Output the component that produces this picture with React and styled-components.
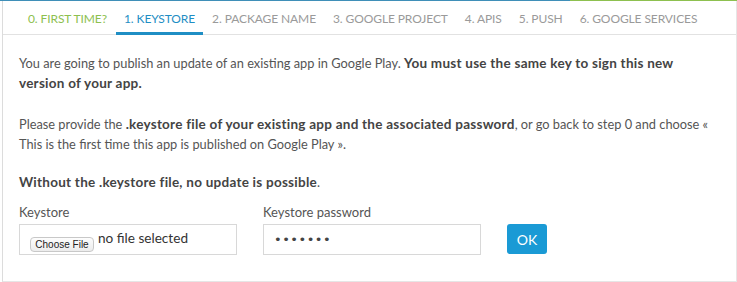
import React from 'react';
import styled, { createGlobalStyle } from 'styled-components';

const GlobalStyle = createGlobalStyle`
    html, body {
        margin: 0;
        padding: 0;
        background: #fff;
        font-family: Lato, "Open Sans", sans-serif;
    }
`;

const Panel = styled.div`
    width: 735px;
    height: 282px;
    margin-left: 2px;
    box-sizing: border-box;
    border-left: 1px solid #dcdcdc;
    border-right: 1px solid #e6e6e6;
    border-bottom: 1px solid #e6e6e6;
    display: flex;
    flex-direction: column;
`;

const Progress = styled.div`
    display: flex;
    height: 1px;
    margin-left: -3px;
    margin-right: -1px;
`;

const ProgressPart = styled.div`
    flex: ${p => p.$grow};
    background: ${p => p.$color};
`;

const Tabs = styled.ul`
    list-style: none;
    margin: 0;
    padding: 0 0 0 17px;
    display: flex;
    height: 33px;
    border-bottom: 1px solid #e2e2e2;
`;

const Tab = styled.li`
    padding: 3px 8px 0 8px;
    margin-right: 1px;
    margin-bottom: -1px;
    display: flex;
    align-items: center;
    font-size: 12px;
    text-transform: uppercase;
    letter-spacing: -0.1px;
    color: ${p => (p.$done ? '#8dc04f' : p.$active ? '#1f8ec4' : '#9a9a9a')};
    border-bottom: 3px solid ${p => (p.$active ? '#1f8ec4' : 'transparent')};
`;

const Body = styled.div`
    width: 700px;
    padding: 18px 0 0 16px;
    color: #555;
    font-size: 12.8px;
    line-height: 20px;
`;

const Paragraph = styled.p`
    margin: 0 0 ${p => p.$gap}px 0;
    color: #555;
    strong {
        color: #444;
        font-weight: 700;
        font-size: 13.5px;
        letter-spacing: 0.25px;
    }
`;

const FieldRow = styled.div`
    display: flex;
    align-items: flex-end;
    gap: 26px;
    margin-top: -9px;
`;

const Field = styled.div`
    display: flex;
    flex-direction: column;
`;

const Label = styled.label`
    font-size: 13px;
    color: #555;
    line-height: 20px;
    margin-bottom: 2px;
`;

const Box = styled.div`
    width: 218px;
    height: 31px;
    box-sizing: border-box;
    border: 1px solid #d8d8d8;
    display: flex;
    align-items: center;
    padding: 0 10px;
`;

const ChooseButton = styled.button`
    font-family: "Liberation Sans", Arial, sans-serif;
    font-size: 10px;
    color: #222;
    background: linear-gradient(#fdfdfd, #ececec);
    border: 1px solid #c8c8c8;
    border-radius: 4px;
    height: 15px;
    width: 64px;
    padding: 0;
    margin-top: 9px;
`;

const FileText = styled.span`
    font-size: 13.6px;
    color: #333;
    margin-left: 4px;
    margin-top: -4px;
`;

const PasswordInput = styled.input`
    width: 218px;
    height: 31px;
    box-sizing: border-box;
    border: 1px solid #d8d8d8;
    padding: 0 10px;
    font-size: 13px;
    letter-spacing: 0.5px;
    color: #444;
    outline: none;
    font-family: "DejaVu Sans", sans-serif;
`;

const OkButton = styled.button`
    width: 40px;
    height: 30px;
    background: #1a9ad5;
    color: #fff;
    border: none;
    border-radius: 3px;
    font-family: Lato, sans-serif;
    font-size: 14px;
    margin-bottom: 1px;
`;

const steps = [
    { label: '0. First time?', done: true },
    { label: '1. Keystore', active: true },
    { label: '2. Package name' },
    { label: '3. Google project' },
    { label: '4. APIs' },
    { label: '5. Push' },
    { label: '6. Google services' },
];

export default function App() {
    return (
        <>
            <GlobalStyle />
            <Panel>
                <Progress>
                    <ProgressPart $grow={570} $color="#3f8fb8" />
                    <ProgressPart $grow={167} $color="#8dc04f" />
                </Progress>
                <Tabs>
                    {steps.map(s => (
                        <Tab key={s.label} $done={s.done} $active={s.active}>
                            {s.label}
                        </Tab>
                    ))}
                </Tabs>
                <Body>
                    <Paragraph $gap={21}>
                        You are going to publish an update of an existing app in Google Play.{' '}
                        <strong>You must use the same key to sign this new version of your app.</strong>
                    </Paragraph>
                    <Paragraph $gap={18}>
                        Please provide the <strong>.keystore file of your existing app and the associated password</strong>,
                        or go back to step 0 and choose « This is the first time this app is published on Google Play ».
                    </Paragraph>
                    <Paragraph $gap={19}>
                        <strong>Without the .keystore file, no update is possible</strong>.
                    </Paragraph>
                    <FieldRow>
                        <Field>
                            <Label>Keystore</Label>
                            <Box>
                                <ChooseButton type="button">Choose File</ChooseButton>
                                <FileText>no file selected</FileText>
                            </Box>
                        </Field>
                        <Field>
                            <Label>Keystore password</Label>
                            <PasswordInput type="password" defaultValue="1234567" />
                        </Field>
                        <OkButton type="button">OK</OkButton>
                    </FieldRow>
                </Body>
            </Panel>
        </>
    );
}
